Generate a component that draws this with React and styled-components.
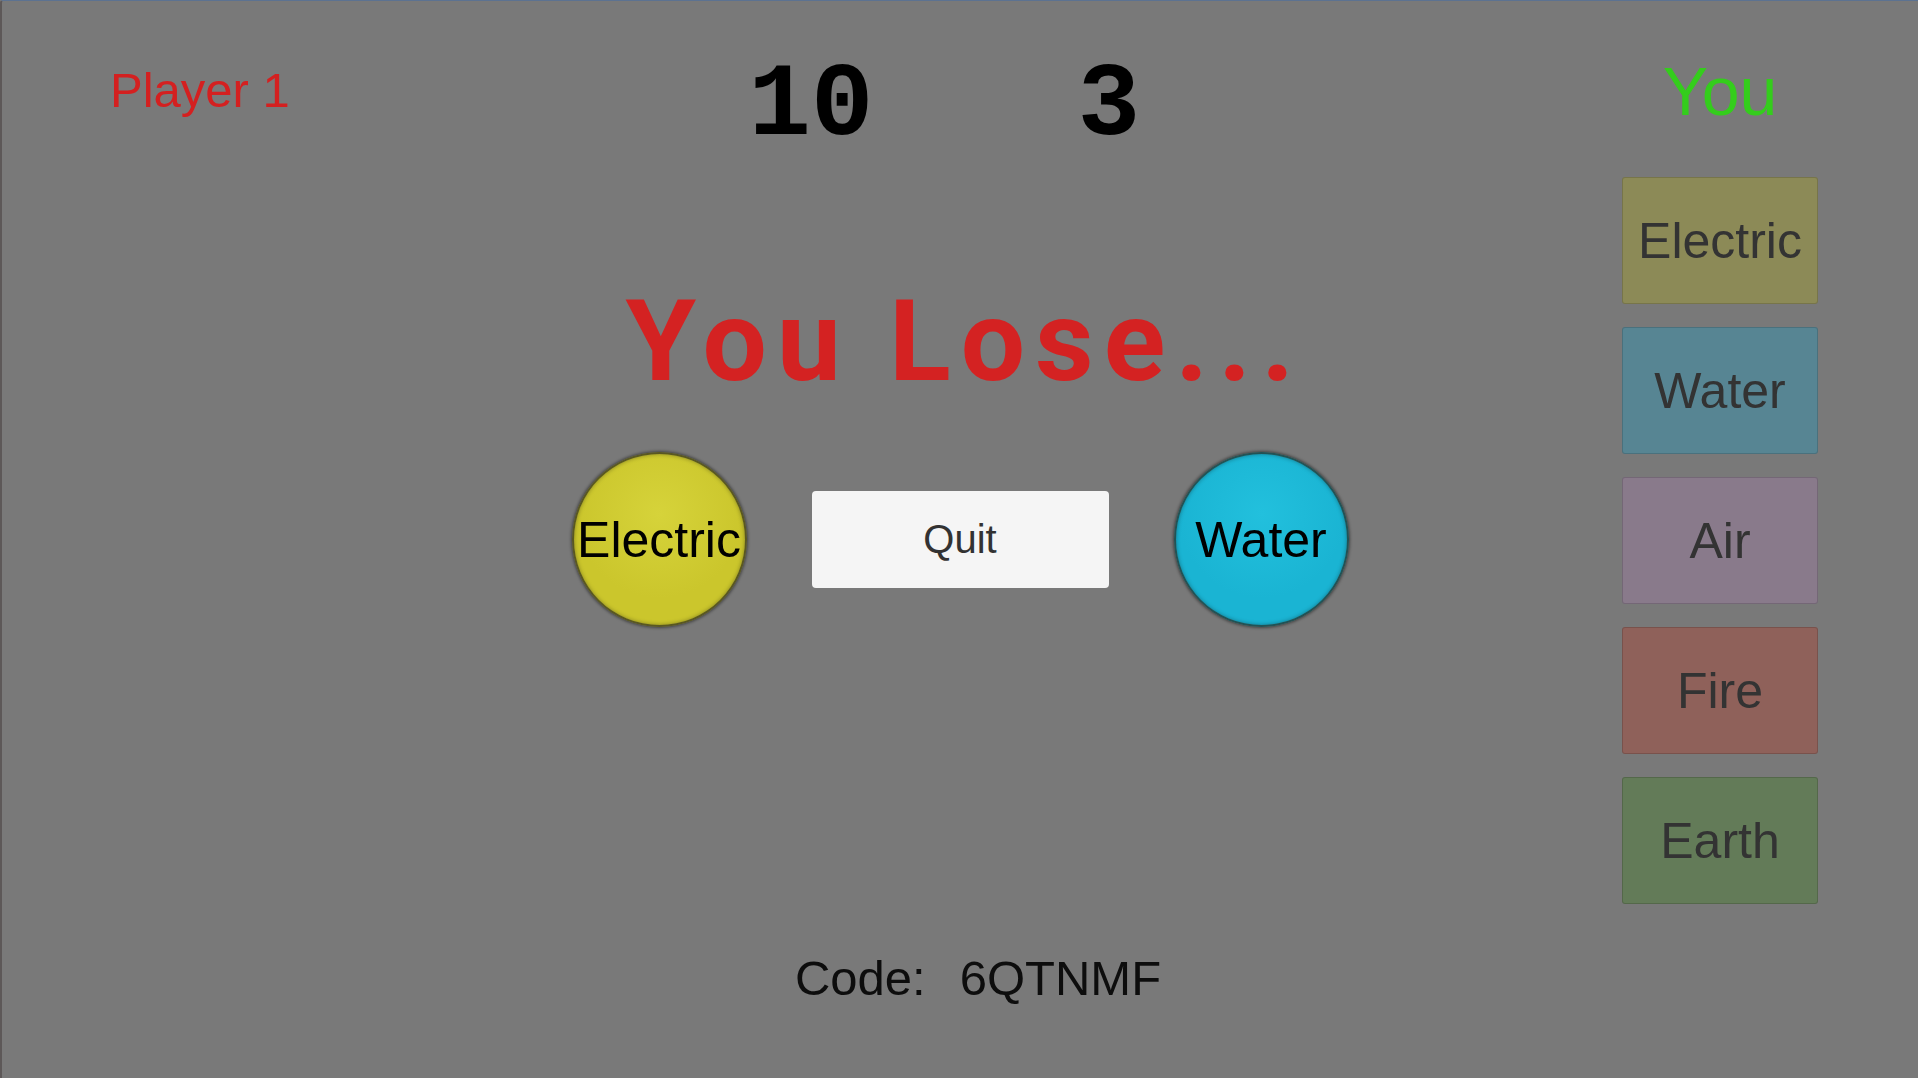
import React from 'react';
import styled, { createGlobalStyle } from 'styled-components';

const GlobalStyle = createGlobalStyle`
  html, body {
    margin: 0;
    padding: 0;
    overflow: hidden;
    background: #797979;
  }
`;

const Screen = styled.div`
  box-sizing: border-box;
  width: 100vw;
  height: 100vh;
  display: grid;
  grid-template-columns: 1fr 1000px 1fr;
  background: #797979;
  border-top: 1px solid #5c7291;
  border-left: 2px solid #5d5858;
  border-top-left-radius: 3px;
  font-family: 'Liberation Sans', Arial, sans-serif;
`;

const LeftSide = styled.div`
  padding: 65px 0 0 108px;
`;

const PlayerName = styled.div`
  font-size: 49px;
  line-height: 1;
  color: ${({ color }) => color};
`;

const Stage = styled.div`
  display: flex;
  flex-direction: column;
  align-items: center;
  padding-top: 53px;
`;

const Scores = styled.div`
  display: flex;
  gap: 98px;
`;

const Score = styled.div`
  width: 200px;
  text-align: center;
  font-family: 'Liberation Mono', 'Courier New', monospace;
  font-weight: bold;
  font-size: 104px;
  line-height: 1;
  color: #000;
`;

const Result = styled.div`
  margin-top: 126px;
  padding-left: 10px;
  font-family: Roboto, 'Liberation Sans', sans-serif;
  font-weight: 700;
  font-size: 114px;
  line-height: 1;
  letter-spacing: 10px;
  white-space: nowrap;
  color: #d42222;
`;

const Actions = styled.div`
  display: flex;
  align-items: center;
  gap: 65px;
  margin-top: 54px;
`;

const Orb = styled.div`
  box-sizing: border-box;
  width: 175px;
  height: 175px;
  border-radius: 50%;
  display: flex;
  align-items: center;
  justify-content: center;
  background: radial-gradient(circle at 50% 35%, ${({ light }) => light} 0%, ${({ base }) => base} 60%);
  border: 2px solid rgba(40, 40, 30, 0.7);
  box-shadow: 0 0 3px 1px rgba(0, 0, 0, 0.45), inset 0 0 4px rgba(0, 0, 0, 0.35);
  font-size: 50px;
  color: #000;
`;

const QuitButton = styled.button`
  width: 297px;
  height: 97px;
  border: none;
  border-radius: 4px;
  background: #f5f5f5;
  font-family: 'Liberation Sans', Arial, sans-serif;
  font-size: 40px;
  color: #323232;
  padding: 0;
`;

const CodeLine = styled.div`
  display: flex;
  margin: 327px 0 0 36px;
  font-size: 49px;
  line-height: 1;
  color: #0d0d0d;
`;

const CodeValue = styled.span`
  margin-left: 34px;
`;

const RightSide = styled.div`
  display: flex;
  flex-direction: column;
  align-items: center;
  width: 196px;
  margin: 0 100px 0 auto;
  padding-top: 56px;
`;

const YouLabel = styled.div`
  font-size: 68px;
  line-height: 1;
  color: #34cd1c;
  margin-bottom: 52px;
`;

const Cards = styled.div`
  display: flex;
  flex-direction: column;
  gap: 23px;
`;

const Card = styled.button`
  box-sizing: border-box;
  width: 196px;
  height: 127px;
  padding: 0;
  border: 1px solid rgba(0, 0, 0, 0.15);
  border-radius: 3px;
  background: ${({ tint }) => tint};
  font-family: 'Liberation Sans', Arial, sans-serif;
  font-size: 50px;
  color: #333;
`;

const elements = [
  { name: 'Electric', tint: '#8c8a57' },
  { name: 'Water', tint: '#578593' },
  { name: 'Air', tint: '#897a8b' },
  { name: 'Fire', tint: '#8f615a' },
  { name: 'Earth', tint: '#637b58' },
];

const App = () => (
  <>
    <GlobalStyle />
    <Screen>
      <LeftSide>
        <PlayerName color="#d42020">Player 1</PlayerName>
      </LeftSide>

      <Stage>
        <Scores>
          <Score>10</Score>
          <Score>3</Score>
        </Scores>
        <Result>You Lose...</Result>
        <Actions>
          <Orb base="#cbc62c" light="#d6d33a">Electric</Orb>
          <QuitButton>Quit</QuitButton>
          <Orb base="#1ab4d3" light="#22c0dd">Water</Orb>
        </Actions>
        <CodeLine>
          <span>Code:</span>
          <CodeValue>6QTNMF</CodeValue>
        </CodeLine>
      </Stage>

      <RightSide>
        <YouLabel>You</YouLabel>
        <Cards>
          {elements.map((el) => (
            <Card key={el.name} tint={el.tint}>
              {el.name}
            </Card>
          ))}
        </Cards>
      </RightSide>
    </Screen>
  </>
);

export default App;
